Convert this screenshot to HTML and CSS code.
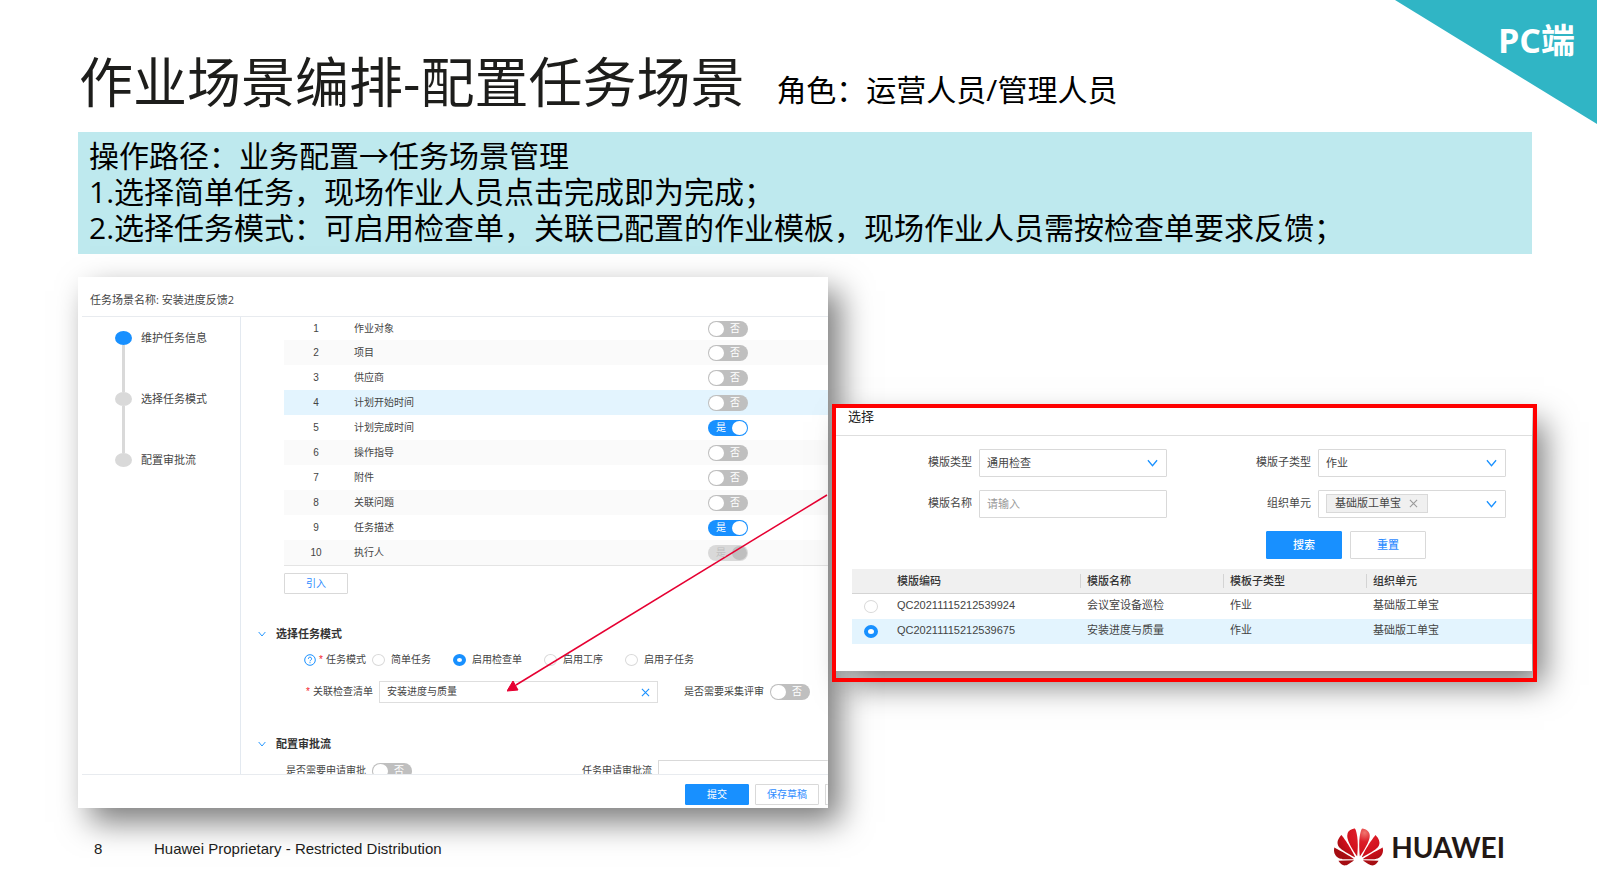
FILE: index.html
```html
<!DOCTYPE html>
<html lang="zh-CN">
<head>
<meta charset="utf-8">
<title>作业场景编排-配置任务场景</title>
<link rel="stylesheet" href="styles.css">
</head>
<body>
<svg width="0" height="0" class="defs" aria-hidden="true">
  <symbol id="chevron" viewBox="0 0 12 8"><path d="M1 1l5 6 5-6" fill="none" stroke="currentColor" stroke-width="1.4"/></symbol>
  <symbol id="cross" viewBox="0 0 10 10"><path d="M1 1l8 8M9 1l-8 8" fill="none" stroke="currentColor" stroke-width="1.2"/></symbol>
</svg>
<div class="slide">
  <div class="corner"><span class="corner-text">PC端</span></div>

  <header class="heading">
    <h1 class="title">作业场景编排-配置任务场景</h1>
    <p class="role">角色：运营人员/管理人员</p>
  </header>

  <section class="intro">
    <p>操作路径：业务配置→任务场景管理</p>
    <p>1.选择简单任务，现场作业人员点击完成即为完成；</p>
    <p>2.选择任务模式：可启用检查单，关联已配置的作业模板，现场作业人员需按检查单要求反馈；</p>
  </section>

  <main class="stage">
    <section class="panel">
      <div class="panel-head">任务场景名称: 安装进度反馈2</div>
      <div class="panel-body">
        <ol class="steps">
          <li class="step active">维护任务信息</li>
          <li class="step">选择任务模式</li>
          <li class="step">配置审批流</li>
        </ol>
        <form class="content">
          <table class="fields">
            <tbody>
              <tr><td>1</td><td>作业对象</td><td><label class="switch"><input type="checkbox" aria-label="作业对象"><span>否</span></label></td></tr>
              <tr><td>2</td><td>项目</td><td><label class="switch"><input type="checkbox" aria-label="项目"><span>否</span></label></td></tr>
              <tr><td>3</td><td>供应商</td><td><label class="switch"><input type="checkbox" aria-label="供应商"><span>否</span></label></td></tr>
              <tr class="current"><td>4</td><td>计划开始时间</td><td><label class="switch"><input type="checkbox" aria-label="计划开始时间"><span>否</span></label></td></tr>
              <tr><td>5</td><td>计划完成时间</td><td><label class="switch"><input type="checkbox" aria-label="计划完成时间" checked><span>是</span></label></td></tr>
              <tr><td>6</td><td>操作指导</td><td><label class="switch"><input type="checkbox" aria-label="操作指导"><span>否</span></label></td></tr>
              <tr><td>7</td><td>附件</td><td><label class="switch"><input type="checkbox" aria-label="附件"><span>否</span></label></td></tr>
              <tr><td>8</td><td>关联问题</td><td><label class="switch"><input type="checkbox" aria-label="关联问题"><span>否</span></label></td></tr>
              <tr><td>9</td><td>任务描述</td><td><label class="switch"><input type="checkbox" aria-label="任务描述" checked><span>是</span></label></td></tr>
              <tr><td>10</td><td>执行人</td><td><label class="switch"><input type="checkbox" aria-label="执行人" checked disabled><span>是</span></label></td></tr>
            </tbody>
          </table>
          <button type="button" class="btn import">引入</button>

          <h2 class="section mode"><svg class="fold"><use href="#chevron"/></svg>选择任务模式</h2>
          <div class="row radios">
            <span class="label">
              <svg class="help" viewBox="0 0 12 12"><circle cx="6" cy="6" r="5.3" fill="none" stroke="#1890ff" stroke-width="1"/><path d="M4.4 4.8a1.6 1.6 0 1 1 2.3 1.4c-.5.3-.7.5-.7 1.1M6 8.2v1" fill="none" stroke="#1890ff" stroke-width="1"/></svg>
              <i class="must">*</i>任务模式</span>
            <div class="options">
              <label class="option"><input type="radio" name="mode">简单任务</label>
              <label class="option"><input type="radio" name="mode" checked>启用检查单</label>
              <label class="option"><input type="radio" name="mode">启用工序</label>
              <label class="option"><input type="radio" name="mode">启用子任务</label>
            </div>
          </div>
          <div class="row checklist">
            <label class="label wide" for="list"><i class="must">*</i>关联检查清单</label>
            <div class="picker">
              <input id="list" type="text" value="安装进度与质量">
              <button type="button" class="clear" aria-label="清除"><svg><use href="#cross"/></svg></button>
            </div>
            <label class="review" for="review">是否需要采集评审</label>
            <label class="switch"><input id="review" type="checkbox"><span>否</span></label>
          </div>

          <h2 class="section flow"><svg class="fold"><use href="#chevron"/></svg>配置审批流</h2>
          <div class="row approval">
            <label class="label" for="apply">是否需要申请审批</label>
            <label class="switch"><input id="apply" type="checkbox"><span>否</span></label>
            <label class="label far" for="applyflow">任务申请审批流</label>
            <input id="applyflow" class="box" type="text">
          </div>
        </form>
      </div>
      <div class="panel-foot">
        <button type="button" class="btn primary">提交</button>
        <button type="button" class="btn">保存草稿</button>
        <button type="button" class="btn cut" aria-label="更多"></button>
      </div>
      <svg class="arrow" viewBox="0 0 321 198" aria-hidden="true"><path d="M320 1L9 191" stroke="#e60032" stroke-width="1.5"/><path d="M0 197l6-10 5 9z" fill="#e60032" stroke="#e60032"/></svg>
    </section>

    <section class="frame">
      <div class="dialog">
        <h2 class="dialog-title">选择</h2>
        <form class="filter">
          <label for="type">模版类型</label>
          <div class="select"><select id="type"><option>通用检查</option></select><svg><use href="#chevron"/></svg></div>
          <label for="subtype">模版子类型</label>
          <div class="select"><select id="subtype"><option>作业</option></select><svg><use href="#chevron"/></svg></div>
          <label for="name">模版名称</label>
          <input id="name" class="box" type="text" placeholder="请输入">
          <span class="unit-label">组织单元</span>
          <div class="select tags">
            <span class="tag">基础版工单宝<button type="button" aria-label="移除"><svg><use href="#cross"/></svg></button></span>
            <svg><use href="#chevron"/></svg>
          </div>
          <div class="actions">
            <button type="button" class="btn primary">搜索</button>
            <button type="button" class="btn">重置</button>
          </div>
        </form>
        <table class="results">
          <thead><tr><th class="pick"></th><th class="code">模版编码</th><th class="mid">模版名称</th><th class="mid">模板子类型</th><th>组织单元</th></tr></thead>
          <tbody>
            <tr><td><input type="radio" name="tpl" aria-label="会议室设备巡检"></td><td>QC20211115212539924</td><td>会议室设备巡检</td><td>作业</td><td>基础版工单宝</td></tr>
            <tr class="current"><td><input type="radio" name="tpl" aria-label="安装进度与质量" checked></td><td>QC20211115212539675</td><td>安装进度与质量</td><td>作业</td><td>基础版工单宝</td></tr>
          </tbody>
        </table>
      </div>
    </section>
  </main>

  <footer class="footer">
    <span class="page">8</span>
    <span>Huawei Proprietary - Restricted Distribution</span>
    <div class="brand">
      <svg class="petals" viewBox="0 2.9 24 18.2" aria-hidden="true">
        <defs><radialGradient id="red" gradientUnits="userSpaceOnUse" cx="15" cy="5" r="15"><stop offset="0" stop-color="#f0776f"/><stop offset=".3" stop-color="#dc1c27"/><stop offset=".7" stop-color="#cf0f1b"/><stop offset="1" stop-color="#a50d12"/></radialGradient></defs>
        <path fill="url(#red)" d="M3.67 6.14S1.82 7.91 1.72 9.78v.35c.08 1.51 1.22 2.4 1.22 2.4 1.83 1.79 6.26 4.04 7.3 4.55 0 0 .06.03.1-.01l.02-.04v-.04C7.52 10.8 3.67 6.14 3.67 6.14zM9.65 18.6c-.02-.08-.1-.08-.1-.08l-7.38.26c.8 1.43 2.15 2.53 3.56 2.2.96-.25 3.16-1.78 3.88-2.3.06-.05.04-.09.04-.09zm.08-.78C6.49 15.63.21 12.28.21 12.28c-.15.46-.2.9-.21 1.3v.07c0 1.07.4 1.82.4 1.82.8 1.69 2.34 2.2 2.34 2.2.7.3 1.4.31 1.4.31.12.02 4.4 0 5.54 0 .05 0 .08-.05.08-.05v-.06c0-.03-.03-.05-.03-.05zM9.06 3.19a3.42 3.42 0 00-2.57 3.15v.41c.03.6.16 1.05.16 1.05.66 2.9 3.86 7.65 4.55 8.65.05.05.1.03.1.03a.1.1 0 00.06-.1c1.06-10.6-1.11-13.42-1.11-13.42-.32.02-1.19.23-1.19.23zm8.3 2.27s-.49-1.8-2.44-2.28c0 0-.57-.14-1.17-.22 0 0-2.18 2.81-1.12 13.43.01.07.06.08.06.08.07.03.1-.03.1-.03.72-1.03 3.9-5.76 4.55-8.64 0 0 .36-1.4.02-2.34zm-2.92 13.07s-.07 0-.09.05c0 0-.01.07.03.1.7.51 2.85 2 3.88 2.3 0 0 .16.05.43.06h.14c.69-.02 1.9-.37 3-2.26l-7.4-.25zm7.83-8.41c.14-2.06-1.94-3.97-1.94-3.98 0 0-3.85 4.66-6.67 10.8 0 0-.03.08.02.13l.04.01h.06c1.06-.53 5.46-2.77 7.28-4.54 0 0 1.15-.93 1.21-2.42zm1.52 2.14s-6.28 3.37-9.52 5.55c0 0-.05.04-.03.11 0 0 .03.06.07.06 1.16 0 5.56 0 5.67-.02 0 0 .57-.02 1.27-.29 0 0 1.56-.5 2.37-2.27 0 0 .73-1.45.17-3.14z"/>
      </svg>
      <span class="wordmark">HUAWEI</span>
    </div>
  </footer>
</div>
</body>
</html>
```

FILE: styles.css
```css
* {
  box-sizing: border-box;
}

body,
h1,
h2,
p,
ol {
  margin: 0;
  padding: 0;
}

body {
  background: #fff;
  color: #000;
  font-family: "Open Sans", "Noto Sans CJK SC", sans-serif;
}

button,
input,
select {
  margin: 0;
  padding: 0;
  font: inherit;
  color: inherit;
}

table {
  border-collapse: separate;
  border-spacing: 0;
  table-layout: fixed;
}

td,
th {
  padding: 0;
  text-align: left;
}

.defs {
  position: absolute;
}

.slide {
  position: relative;
  min-height: 100vh;
  overflow: hidden;
}

/* Corner ribbon */
.corner {
  position: absolute;
  top: 0;
  right: 0;
  width: 202px;
  height: 124px;
  padding: 17px 22px 0 0;
  background: #30b5c5;
  clip-path: polygon(0 0, 100% 0, 100% 100%);
  text-align: right;
}

.corner-text {
  font-size: 34px;
  font-weight: 700;
  line-height: 46px;
  color: #fff;
}

/* Heading */
.heading {
  display: flex;
  align-items: flex-end;
  gap: 32px;
  padding: 52px 240px 20px 79px;
}

.title {
  font-size: 54px;
  font-weight: 400;
  line-height: 60px;
  color: #1d1d1b;
}

.role {
  font-size: 30px;
  line-height: 44px;
}

.intro {
  margin: 0 65px 0 78px;
  padding: 6px 11px 8px;
  background: #bee9ee;
  font-size: 30px;
  line-height: 36px;
}

/* Window area */
.stage {
  display: grid;
  grid-template-columns: 750fr 705fr;
  gap: 4px;
  align-items: start;
  margin: 23px 60px 0 78px;
}

.panel {
  position: relative;
  overflow: hidden;
  background: #fff;
  box-shadow: 12px 14px 30px rgba(0, 0, 0, .52);
  font-family: "Liberation Sans", "Noto Sans CJK SC", sans-serif;
  font-size: 10px;
  line-height: 16px;
  color: #444;
}

.panel-head {
  margin-left: 4px;
  padding: 15px 8px 8px;
  border-bottom: 1px solid #e8ebef;
  font-family: "Open Sans", "Noto Sans CJK SC", sans-serif;
  font-size: 11px;
}

.panel-body {
  display: grid;
  grid-template-columns: 159px 1fr;
  height: 457px;
  margin-left: 4px;
  overflow: hidden;
}

.panel-foot {
  display: flex;
  justify-content: flex-end;
  gap: 6px;
  margin-left: 4px;
  padding: 9px 0 3px;
  border-top: 1px solid #e8ebef;
}

/* Steps */
.steps {
  padding: 13px 0 0 33px;
  border-right: 1px solid #e3e9f0;
  list-style: none;
  font-size: 11px;
}

.step {
  display: grid;
  grid-template-columns: 17px 1fr;
  grid-template-rows: 16px 45px;
  align-items: center;
  justify-items: start;
  column-gap: 9px;
}

.step::before {
  content: "";
  justify-self: center;
  width: 17px;
  height: 14px;
  border-radius: 50%;
  background: #d9d9d9;
}

.step.active::before {
  background: #1890ff;
}

.step:not(:last-child)::after {
  content: "";
  grid-area: 2 / 1;
  justify-self: center;
  width: 3px;
  height: 47px;
  background: #d9d9d9;
}

/* Fields table */
.content {
  min-width: 0;
}

.fields {
  width: calc(100% - 43px);
  margin-left: 43px;
  border-bottom: 1px solid #e4e4e4;
}

.fields td {
  height: 25px;
  vertical-align: middle;
}

.fields tr:first-child td {
  height: 23px;
}

.fields td:first-child {
  width: 64px;
  text-align: center;
}

.fields td:nth-child(2) {
  padding-left: 6px;
}

.fields td:last-child {
  width: 120px;
}

.fields tr:nth-child(even) {
  background: #fafafa;
}

.fields tr.current,
.results tr.current {
  background: #e3f4fe;
}

/* Switch */
.switch {
  display: grid;
  flex: none;
  width: 40px;
  height: 16px;
  align-items: center;
  color: #fff;
  line-height: 14px;
}

.switch input {
  grid-area: 1 / 1;
  appearance: none;
  display: flex;
  width: 40px;
  height: 16px;
  padding: 1px;
  border-radius: 8px;
  background: #bfbfbf;
}

.switch input::before {
  content: "";
  width: 15px;
  height: 14px;
  border-radius: 50%;
  background: #fff;
}

.switch span {
  grid-area: 1 / 1;
  z-index: 1;
  padding-left: 22px;
}

.switch input:checked {
  justify-content: flex-end;
  background: #1890ff;
}

.switch input:checked + span {
  padding-left: 8px;
}

.switch input:disabled {
  background: #d9d9d9;
}

.switch input:disabled::before {
  background: #bfbfbf;
}

.switch input:disabled + span {
  color: #bfbfbf;
}

/* Buttons */
.btn {
  width: 64px;
  height: 21px;
  border: 1px solid #d9d9d9;
  border-radius: 1px;
  background: #fff;
  color: #2f8cff;
  line-height: 16px;
}

.btn.primary {
  border-color: #1890ff;
  background: #1890ff;
  color: #fff;
}

.btn.cut {
  width: 3px;
  border-right: 0;
}

.import {
  display: block;
  margin: 7px 0 0 43px;
}

/* Form sections */
.section {
  display: flex;
  align-items: center;
  gap: 10px;
  padding-left: 17px;
  font-size: 11px;
  font-weight: 700;
  line-height: 16px;
  color: #333;
}

.section.mode {
  margin-top: 32px;
}

.section.flow {
  margin-top: 33px;
}

.fold {
  width: 8px;
  height: 6px;
  color: #1890ff;
}

.row {
  display: flex;
  align-items: center;
  gap: 6px;
}

.radios {
  margin-top: 10px;
}

.checklist {
  margin-top: 13px;
}

.approval {
  margin-top: 8px;
}

.label {
  display: flex;
  flex: none;
  align-items: center;
  justify-content: flex-end;
  width: 125px;
}

.label.wide {
  width: 132px;
}

.label.far {
  width: 234px;
}

.must {
  margin: 0 3px;
  font-style: normal;
  color: #f5222d;
}

.help {
  width: 12px;
  height: 12px;
}

.options {
  display: flex;
  gap: 22px;
}

.option {
  display: flex;
  align-items: center;
  gap: 7px;
  white-space: nowrap;
}

input[type="radio"] {
  appearance: none;
  width: 13px;
  height: 12px;
  border: 1px solid #d9d9d9;
  border-radius: 50%;
  background: #fff;
}

.option input[type="radio"] {
  margin-right: -1px;
}

input[type="radio"]:checked {
  border: 4px solid #1890ff;
}

.picker {
  display: flex;
  flex: 1;
  align-items: center;
  height: 22px;
  padding: 0 7px;
  border: 1px solid #dedede;
}

.picker input {
  flex: 1;
  min-width: 0;
  border: 0;
  outline: 0;
}

.clear,
.tag button {
  display: flex;
  border: 0;
  background: none;
}

.clear svg {
  width: 9px;
  height: 9px;
  color: #1890ff;
}

.review {
  margin-left: 20px;
}

.checklist .switch {
  margin-right: 18px;
}

.box {
  flex: 1;
  min-width: 0;
  height: 22px;
  padding: 0 7px;
  border: 1px solid #d9d9d9;
  border-radius: 1px;
}

.approval .box {
  border-right: 0;
}

.box::placeholder {
  color: #999;
}

.arrow {
  position: absolute;
  top: 217px;
  right: 0;
  width: 321px;
  height: 198px;
  pointer-events: none;
}

/* Dialog */
.frame {
  position: relative;
  margin-top: 127px;
  padding: 4px 5px 11px 4px;
}

.frame::after {
  content: "";
  position: absolute;
  inset: 0;
  border: 4px solid #f00;
  pointer-events: none;
}

.dialog {
  padding-bottom: 27px;
  background: #fff;
  box-shadow: 12px 14px 30px rgba(0, 0, 0, .52);
  font-family: "Liberation Sans", "Noto Sans CJK SC", sans-serif;
  font-size: 11px;
  line-height: 16px;
  color: #444;
}

.dialog-title {
  padding: 0 12px 9px;
  border-bottom: 1px solid #dedede;
  font-size: 13px;
  font-weight: 400;
  line-height: 18px;
  color: #222;
}

.filter {
  display: grid;
  grid-template-columns: 136px 1fr 137px 1fr;
  gap: 13px 7px;
  padding: 13px 26px 0 0;
}

.filter > label,
.unit-label {
  padding-top: 5px;
  text-align: right;
}

.filter .box {
  height: 28px;
}

.select {
  display: grid;
  align-items: center;
  height: 28px;
  border: 1px solid #d9d9d9;
  border-radius: 1px;
}

.select select {
  grid-area: 1 / 1;
  appearance: none;
  width: 100%;
  height: 26px;
  padding: 0 7px;
  border: 0;
  background: none;
}

.select > svg {
  grid-area: 1 / 1;
  justify-self: end;
  width: 11px;
  height: 8px;
  margin-right: 8px;
  color: #1890ff;
  pointer-events: none;
}

.tag {
  grid-area: 1 / 1;
  justify-self: start;
  display: flex;
  align-items: center;
  gap: 8px;
  height: 19px;
  margin: 0 7px 2px;
  padding: 0 9px 0 8px;
  border: 1px solid #d9d9d9;
  background: #f0f0f0;
}

.tag svg {
  width: 9px;
  height: 9px;
  color: #999;
}

.actions {
  grid-column: 1 / -1;
  display: flex;
  justify-content: flex-end;
  gap: 8px;
  padding-right: 80px;
}

.actions .btn {
  width: 76px;
  height: 28px;
  font-weight: 500;
}

.results {
  width: calc(100% - 16px);
  margin: 10px 0 0 16px;
}

.results th {
  height: 25px;
  padding-left: 7px;
  border-bottom: 1px solid #d4d4d4;
  background: linear-gradient(#d4d4d4, #d4d4d4) 0 50% / 1px 14px no-repeat #f0f0f0;
  font-weight: 500;
  color: #333;
}

.results th.pick,
.results th.code {
  background: #f0f0f0;
}

.results .pick {
  width: 38px;
}

.results .code {
  width: 190px;
}

.results .mid {
  width: 143px;
}

.results td {
  height: 25px;
  padding: 0 0 3px 7px;
}

.results td:first-child {
  padding: 0 0 0 12px;
}

.results input[type="radio"] {
  display: block;
  width: 14px;
  height: 13px;
}

/* Footer */
.footer {
  display: flex;
  align-items: center;
  margin-top: 20px;
  padding: 0 92px 0 94px;
  font-family: "Liberation Sans", sans-serif;
  font-size: 15px;
  line-height: 20px;
  color: #1d1d1b;
}

.footer > span {
  padding-top: 4px;
}

.page {
  width: 60px;
}

.brand {
  display: flex;
  align-items: center;
  gap: 8px;
  margin-left: auto;
}

.petals {
  width: 49px;
  height: 38px;
}

.wordmark {
  font-family: Lato, sans-serif;
  font-size: 28px;
  font-weight: 700;
  line-height: 38px;
  color: #231815;
}
```
